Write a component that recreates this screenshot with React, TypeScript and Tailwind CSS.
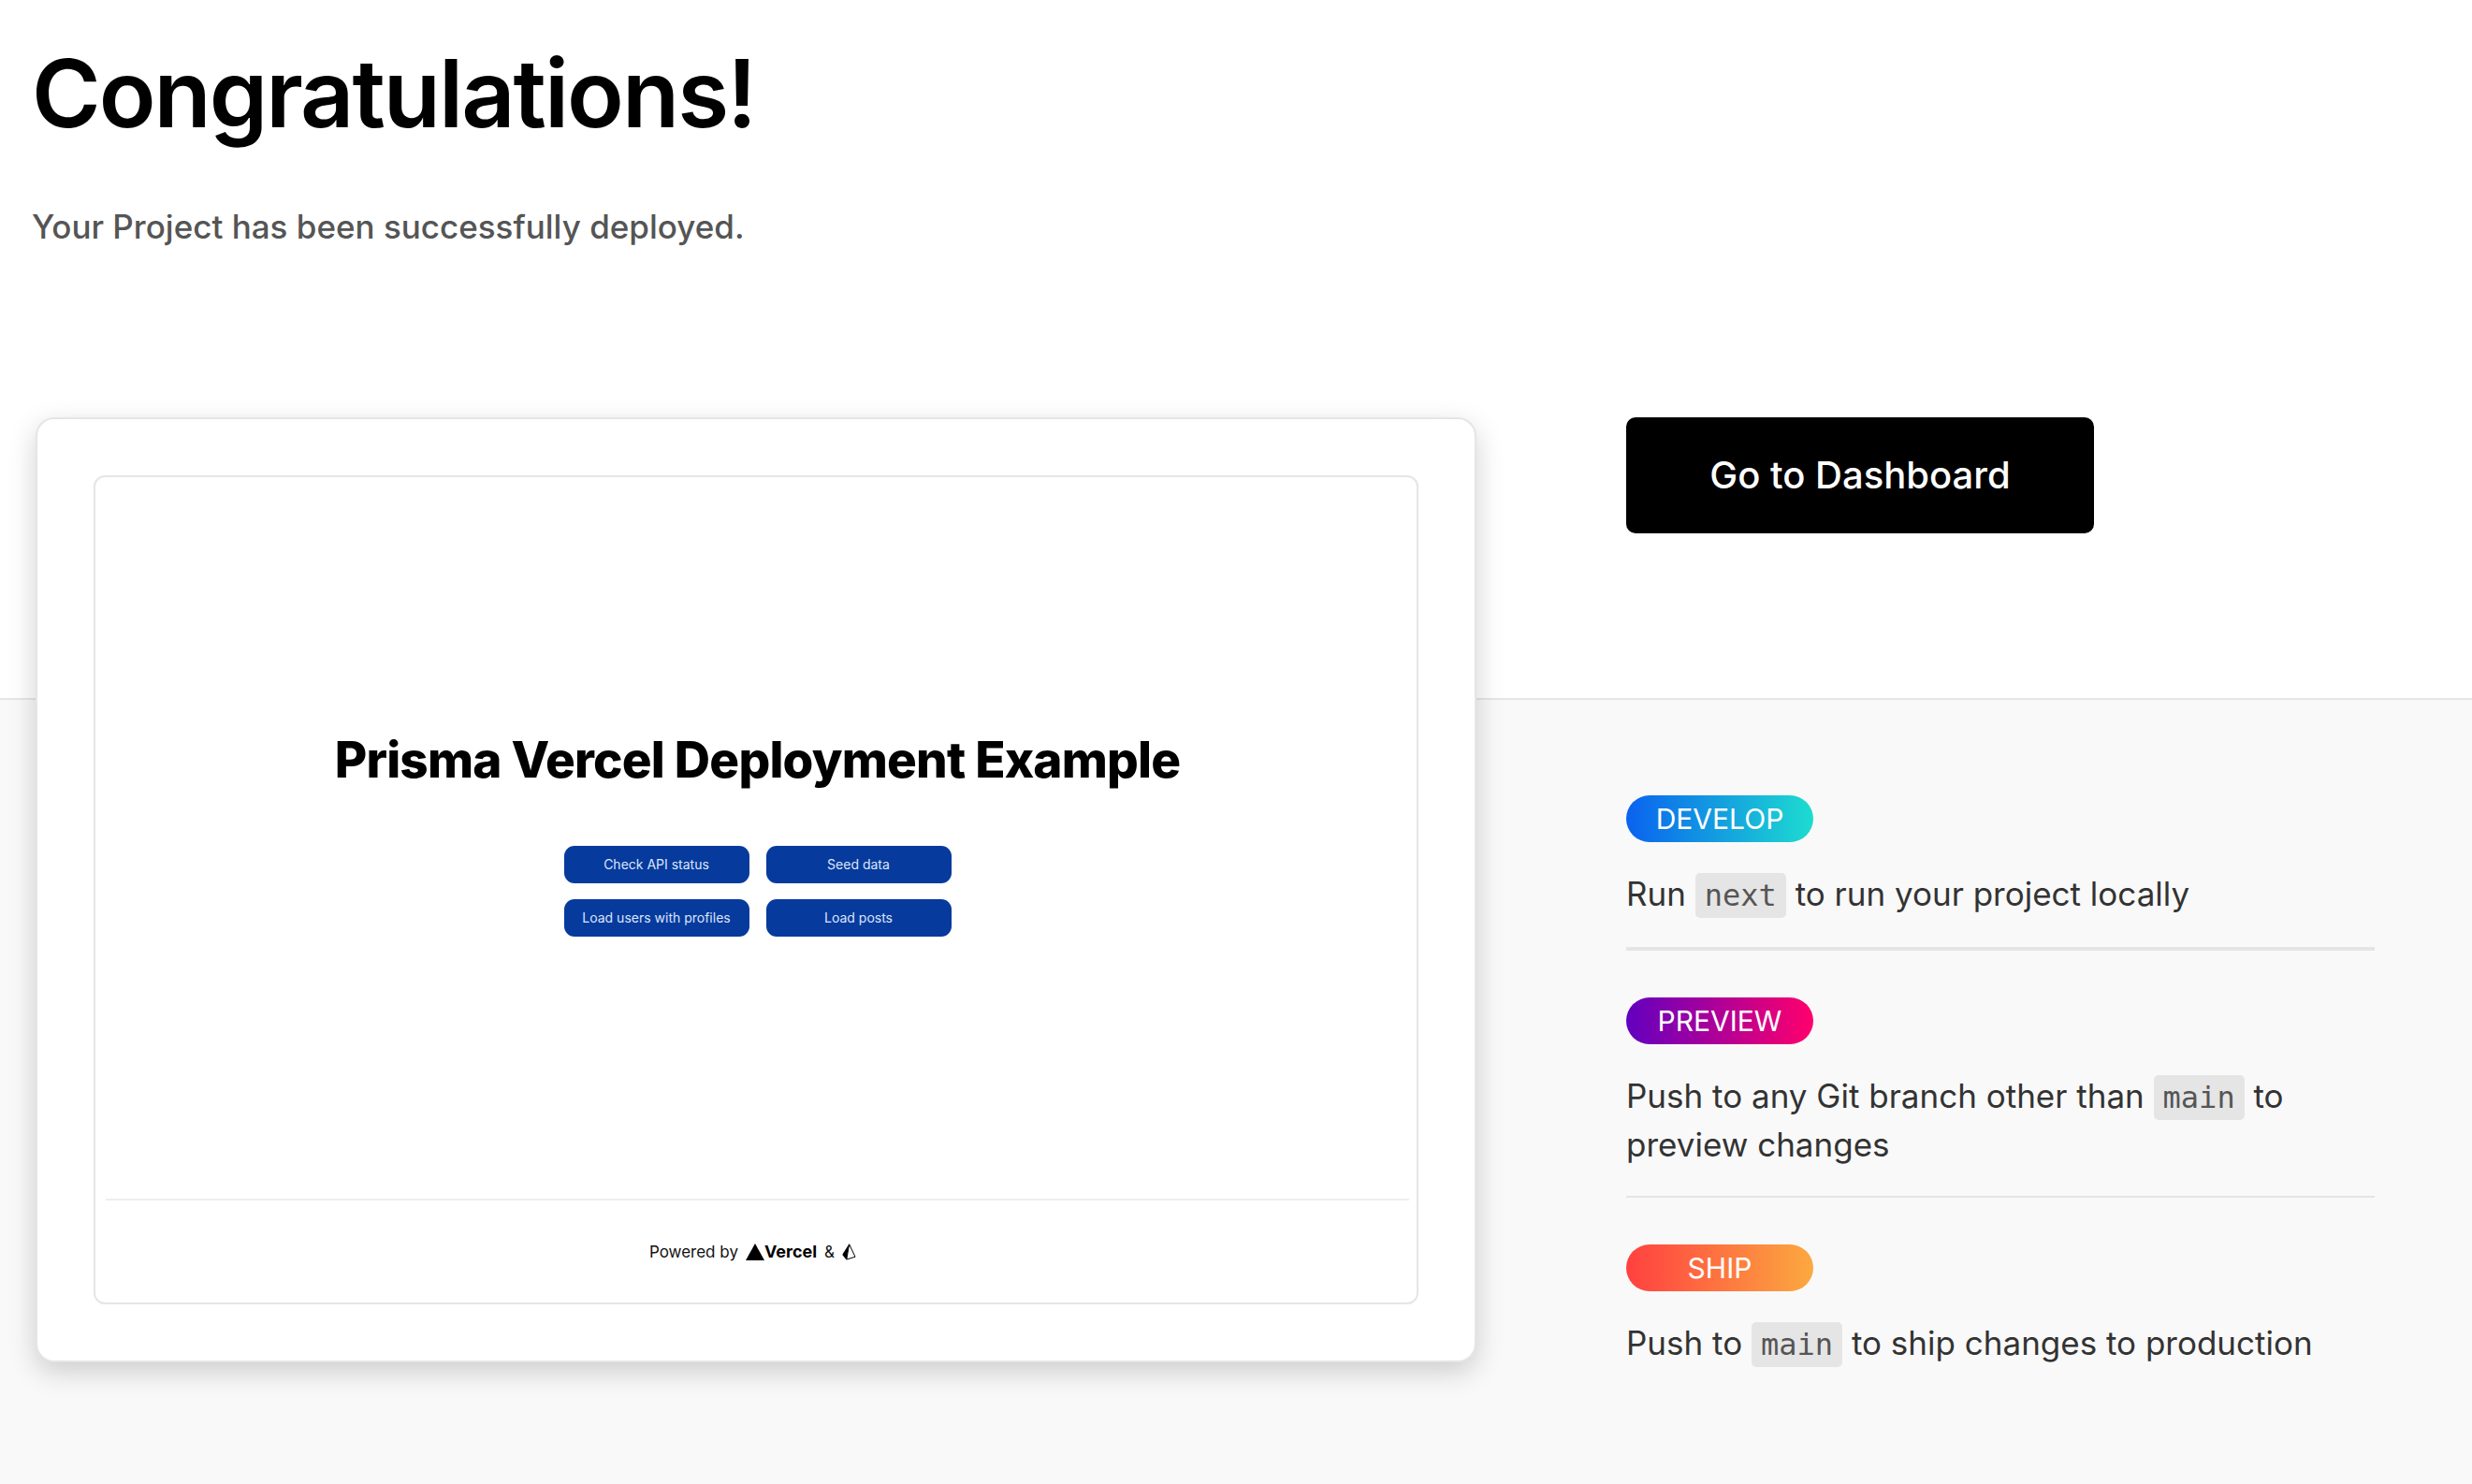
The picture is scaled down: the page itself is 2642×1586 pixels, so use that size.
import type { ReactNode } from "react";

function Code({ children }: { children: ReactNode }) {
  return (
    <code className="rounded-[5px] bg-[#e5e5e5] px-[10px] py-[5px] font-['DejaVu_Sans_Mono',monospace] text-[32px] leading-none text-[#555555]">
      {children}
    </code>
  );
}

function Pill({ gradient, children }: { gradient: string; children: ReactNode }) {
  return (
    <h2
      className={`flex h-[50px] w-[200px] items-center justify-center rounded-full bg-linear-to-r/srgb text-[30px] leading-none font-normal text-white ${gradient}`}
    >
      {children}
    </h2>
  );
}

function PreviewButton({ children }: { children: ReactNode }) {
  return (
    <button
      type="button"
      className="h-10 w-[198px] rounded-[11px] bg-[#073a9d] text-[14px] leading-none text-[#dbe6fb]"
    >
      {children}
    </button>
  );
}

function PrismaMark() {
  return (
    <svg viewBox="0 0 15 18" className="h-[18px] w-[15px]" aria-label="Prisma" role="img">
      <path d="M7.6.8 L14 14.2 L4.8 17 Z" fill="none" stroke="#000" strokeWidth="1" strokeLinejoin="round" />
      <path d="M7.6.3 L.6 11.2 Q.3 11.8 .7 12.4 L4.6 17.6 Z" fill="#000" />
    </svg>
  );
}

function DeploymentPreview() {
  return (
    <div className="rounded-[20px] border-2 border-[#e5e5e5] bg-white p-[60px] shadow-[0_10px_30px_rgba(0,0,0,0.18)]">
      <div className="flex min-h-[886px] flex-col rounded-xl border-2 border-[#e5e5e5] pr-2 pl-[11px]">
        <div className="flex flex-1 flex-col items-center justify-center pb-[10px]">
          <h2 className="text-[53px] leading-[64px] font-extrabold tracking-[-0.015em] text-black">
            Prisma Vercel Deployment Example
          </h2>
          <div className="mt-[60px] grid grid-cols-2 gap-x-[18px] gap-y-[17px]">
            <PreviewButton>Check API status</PreviewButton>
            <PreviewButton>Seed data</PreviewButton>
            <PreviewButton>Load users with profiles</PreviewButton>
            <PreviewButton>Load posts</PreviewButton>
          </div>
        </div>
        <footer className="flex h-[111px] items-center justify-center border-t-2 border-[#eeeeee] pr-[10px] text-[17px] leading-6 text-[#111111]">
          <span>Powered by</span>
          <svg viewBox="0 0 20 18" className="ml-2 h-[18px] w-5" aria-hidden="true">
            <path d="M10 0 L20 18 H0 Z" fill="#000" />
          </svg>
          <span className="text-[18px] font-bold text-black">Vercel</span>
          <span className="mx-2">&amp;</span>
          <PrismaMark />
        </footer>
      </div>
    </div>
  );
}

function NextSteps() {
  return (
    <ul className="mt-[280px] text-[35px] leading-[52px] text-[#333333]">
      <li className="border-b-4 border-[#e5e5e5] pb-[31px]">
        <Pill gradient="from-[#0a62ef] to-[#1ddcd0]">DEVELOP</Pill>
        <p className="mt-[29px]">
          Run <Code>next</Code> to run your project locally
        </p>
      </li>
      <li className="border-b-2 border-[#e5e5e5] pt-[50px] pb-[29px]">
        <Pill gradient="from-[#6200c0] to-[#ff006c]">PREVIEW</Pill>
        <p className="mt-[29px]">
          Push to any Git branch other than <Code>main</Code> to preview changes
        </p>
      </li>
      <li className="pt-[50px]">
        <Pill gradient="from-[#ff4040] to-[#fca940]">SHIP</Pill>
        <p className="mt-[29px]">
          Push to <Code>main</Code> to ship changes to production
        </p>
      </li>
    </ul>
  );
}

export default function App() {
  return (
    <main className="flex min-h-screen flex-col bg-white font-['Inter',sans-serif] antialiased">
      <header className="border-b-2 border-[#e5e5e5] px-[34px] pt-10 pb-[478px]">
        <h1 className="text-[100px] leading-[120px] font-semibold tracking-[-0.02em] text-black">Congratulations!</h1>
        <p className="mt-14 text-[35px] leading-[52px] font-medium text-[#555555]">
          Your Project has been successfully deployed.
        </p>
      </header>
      <section className="flex-1 bg-[#f9f9f9] pr-[104px] pl-[38px]">
        <div className="-mt-[302px] grid grid-cols-[minmax(0,77fr)_minmax(0,40fr)] items-start gap-40 pb-24">
          <DeploymentPreview />
          <div>
            <a
              href="#dashboard"
              className="flex h-[124px] w-[500px] items-center justify-center rounded-[10px] bg-black text-[40px] leading-none font-medium text-white"
            >
              Go to Dashboard
            </a>
            <NextSteps />
          </div>
        </div>
      </section>
    </main>
  );
}
